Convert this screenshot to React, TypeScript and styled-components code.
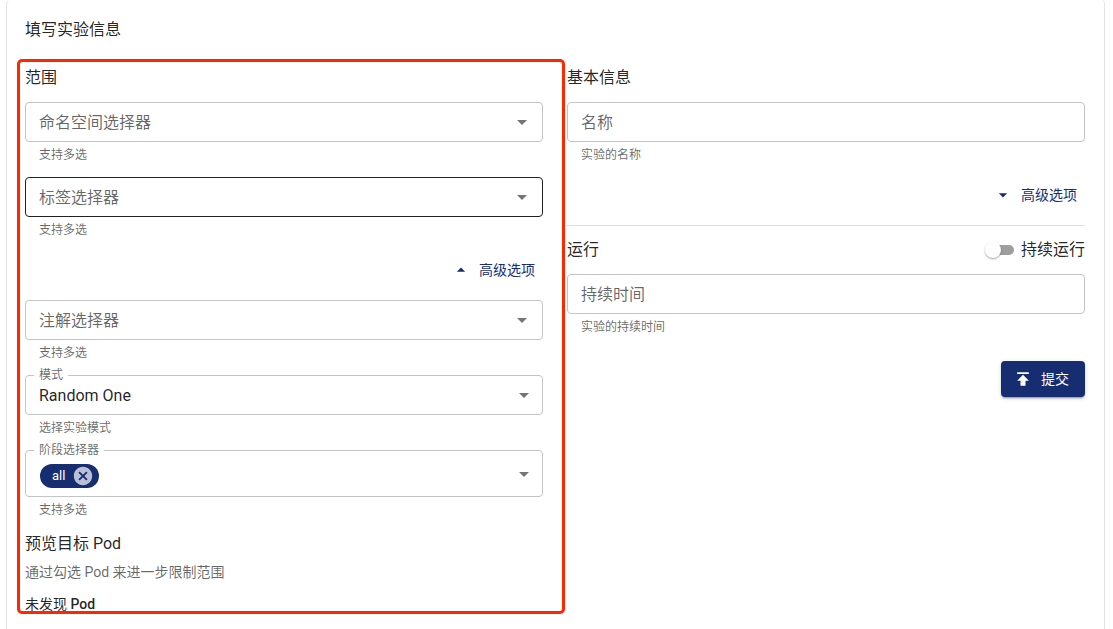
import React, { useState } from 'react';
import styled, { createGlobalStyle, css } from 'styled-components';

const navy = '#172d72';
const ink = 'rgba(0, 0, 0, 0.87)';
const muted = 'rgba(0, 0, 0, 0.6)';

const GlobalStyle = createGlobalStyle`
  *, *::before, *::after { box-sizing: border-box; }
  body {
    margin: 0;
    background: #fff;
    color: ${ink};
    font-family: Roboto, 'Noto Sans CJK SC', sans-serif;
    font-size: 16px;
    line-height: 24px;
  }
  button, input, select { font: inherit; color: inherit; }
`;

const Card = styled.main`
  display: flex;
  flex-direction: column;
  gap: 24px;
  min-height: 100vh;
  margin: 0 8px 0 6px;
  padding: 18px 19px 15px 18px;
  border: 1px solid #e3e3e3;
  border-width: 0 1px;
  border-radius: 4px 4px 0 0;
`;

const Title = styled.h1`
  margin: 0;
  font-size: 16px;
  font-weight: 400;
`;

const Columns = styled.form`
  display: grid;
  grid-template-columns: minmax(0, 1fr) minmax(0, 1fr);
  gap: 24px;
  align-items: start;
`;

const Column = styled.section`
  position: relative;
  display: flex;
  flex-direction: column;
  gap: 12px;
`;

const Highlight = styled.div`
  position: absolute;
  inset: -7px -22px 0 -8px;
  border: 3px solid #ff2600;
  border-radius: 5px;
  pointer-events: none;
`;

const Heading = styled.h2`
  margin: 0;
  font-size: 16px;
  font-weight: 400;
`;

const HeadingRow = styled.div`
  display: flex;
  align-items: center;
  justify-content: space-between;
`;

const FieldRoot = styled.div`
  display: flex;
  flex-direction: column;
  gap: 3px;
`;

const Frame = styled.div`
  position: relative;
  display: flex;
  align-items: center;
`;

const FieldLabel = styled.label<{ $raised?: boolean }>`
  position: absolute;
  color: ${muted};
  pointer-events: none;
  ${({ $raised }) =>
    $raised
      ? css`
          top: -10px;
          left: 9px;
          padding: 0 5px;
          background: #fff;
          font-size: 12px;
          line-height: 20px;
        `
      : css`
          top: 9px;
          left: 14px;
        `}
`;

const outline = css<{ $dark?: boolean }>`
  width: 100%;
  height: 40px;
  border: 1px solid ${({ $dark }) => ($dark ? '#212121' : '#c4c4c4')};
  border-radius: 4px;
  background: #fff;
  outline: none;
`;

const TextInput = styled.input`
  ${outline}
  padding: 2px 13px 0;
`;

const SelectInput = styled.select<{ $dark?: boolean }>`
  ${outline}
  appearance: none;
  padding: 2px 36px 0 13px;
`;

const TagBox = styled.div`
  ${outline}
  display: flex;
  align-items: center;
  height: 47px;
  padding: 5px 36px 0 14px;
`;

const TagInput = styled.input`
  flex: 1;
  min-width: 0;
  border: 0;
  outline: none;
  background: none;
`;

const Arrow = styled.svg<{ $inset: number }>`
  position: absolute;
  right: ${({ $inset }) => $inset}px;
  width: 24px;
  height: 24px;
  fill: #757575;
  pointer-events: none;
`;

const Helper = styled.p`
  margin: 0;
  padding: 0 14px;
  color: ${muted};
  font-size: 12px;
  line-height: 20px;
`;

const Chip = styled.span`
  display: flex;
  align-items: center;
  gap: 7px;
  height: 24px;
  padding: 0 5px 0 12px;
  border-radius: 12px;
  background: ${navy};
  color: #fff;
  font-size: 13px;
`;

const ChipRemove = styled.button`
  display: flex;
  padding: 0;
  border: 0;
  background: none;
  cursor: pointer;
  svg {
    width: 22px;
    height: 22px;
    fill: rgba(255, 255, 255, 0.7);
  }
`;

const MoreButton = styled.button`
  display: flex;
  align-items: center;
  align-self: flex-end;
  gap: 8px;
  height: 36px;
  padding: 0 8px;
  border: 0;
  border-radius: 4px;
  background: none;
  color: ${navy};
  font-size: 14px;
  cursor: pointer;
  svg {
    width: 20px;
    height: 20px;
    fill: currentColor;
  }
`;

const Divider = styled.hr`
  width: 100%;
  height: 1px;
  margin: 0;
  border: 0;
  background: #e0e0e0;
`;

const SwitchLabel = styled.label`
  display: flex;
  align-items: center;
  gap: 7px;
  cursor: pointer;
`;

const Switch = styled.input`
  display: flex;
  align-items: center;
  appearance: none;
  width: 26px;
  height: 10px;
  margin: 0;
  border-radius: 5px;
  background: #9e9e9e;
  cursor: pointer;
  &::before {
    content: '';
    width: 16px;
    height: 16px;
    margin-left: -3px;
    flex: none;
    border-radius: 50%;
    background: #fff;
    box-shadow: 0 1px 2px rgba(0, 0, 0, 0.35);
  }
  &:checked { background: ${navy}; }
  &:checked::before { margin-left: 13px; }
`;

const Submit = styled.button`
  display: flex;
  align-items: center;
  align-self: flex-end;
  gap: 8px;
  height: 36px;
  margin-top: 12px;
  padding: 0 16px 0 12px;
  border: 0;
  border-radius: 4px;
  background: ${navy};
  color: #fff;
  font-size: 14px;
  box-shadow: 0 3px 1px -2px rgba(0, 0, 0, 0.2), 0 2px 2px rgba(0, 0, 0, 0.14),
    0 1px 5px rgba(0, 0, 0, 0.12);
  cursor: pointer;
  svg {
    width: 20px;
    height: 20px;
    fill: currentColor;
  }
`;

const Preview = styled.div`
  display: flex;
  flex-direction: column;
  gap: 6px;
`;

const Hint = styled.p`
  margin: 0;
  color: ${muted};
  font-size: 14px;
  line-height: 20px;
`;

const Empty = styled.p`
  margin: 0;
  font-size: 14px;
  line-height: 20px;
  strong { font-weight: 500; }
`;

const DropArrow = ({ inset }: { inset: number }) => (
  <Arrow $inset={inset} viewBox="0 0 24 24" aria-hidden="true">
    <path d="M7 10l5 5 5-5z" />
  </Arrow>
);

type FieldProps = { id: string; label: string; helper: string };

function TextField({ id, label, helper }: FieldProps) {
  const [value, setValue] = useState('');
  return (
    <FieldRoot>
      <Frame>
        <TextInput
          id={id}
          type="text"
          value={value}
          aria-describedby={`${id}-help`}
          onChange={(e) => setValue(e.target.value)}
        />
        <FieldLabel htmlFor={id} $raised={value !== ''}>{label}</FieldLabel>
      </Frame>
      <Helper id={`${id}-help`}>{helper}</Helper>
    </FieldRoot>
  );
}

function SelectField({
  id, label, helper, options = [], dark,
}: FieldProps & { options?: string[]; dark?: boolean }) {
  const [value, setValue] = useState(options[0] ?? '');
  return (
    <FieldRoot>
      <Frame>
        <SelectInput
          id={id}
          $dark={dark}
          value={value}
          aria-describedby={`${id}-help`}
          onChange={(e) => setValue(e.target.value)}
        >
          {options.length === 0 && <option value="" />}
          {options.map((o) => <option key={o}>{o}</option>)}
        </SelectInput>
        <FieldLabel htmlFor={id} $raised={value !== ''}>{label}</FieldLabel>
        <DropArrow inset={value ? 7 : 9} />
      </Frame>
      <Helper id={`${id}-help`}>{helper}</Helper>
    </FieldRoot>
  );
}

function TagField({ id, label, helper }: FieldProps) {
  const [tags, setTags] = useState(['all']);
  return (
    <FieldRoot>
      <Frame>
        <TagBox>
          {tags.map((tag) => (
            <Chip key={tag}>
              {tag}
              <ChipRemove
                type="button"
                aria-label={tag}
                onClick={() => setTags(tags.filter((t) => t !== tag))}
              >
                <svg viewBox="0 0 24 24" aria-hidden="true">
                  <path d="M12 2C6.47 2 2 6.47 2 12s4.47 10 10 10 10-4.47 10-10S17.53 2 12 2zm5 13.59L15.59 17 12 13.41 8.41 17 7 15.59 10.59 12 7 8.41 8.41 7 12 10.59 15.59 7 17 8.41 13.41 12 17 15.59z" />
                </svg>
              </ChipRemove>
            </Chip>
          ))}
          <TagInput id={id} type="text" aria-describedby={`${id}-help`} />
        </TagBox>
        <FieldLabel htmlFor={id} $raised>{label}</FieldLabel>
        <DropArrow inset={7} />
      </Frame>
      <Helper id={`${id}-help`}>{helper}</Helper>
    </FieldRoot>
  );
}

function More({ open, onClick }: { open: boolean; onClick: () => void }) {
  return (
    <MoreButton type="button" aria-expanded={open} onClick={onClick}>
      <svg viewBox="0 0 24 24" aria-hidden="true">
        <path d={open ? 'M7 14l5-5 5 5z' : 'M7 10l5 5 5-5z'} />
      </svg>
      高级选项
    </MoreButton>
  );
}

export default function App() {
  const [scopeOpen, setScopeOpen] = useState(true);
  const [basicOpen, setBasicOpen] = useState(false);
  return (
    <>
      <GlobalStyle />
      <Card>
        <Title>填写实验信息</Title>
        <Columns onSubmit={(e) => e.preventDefault()}>
          <Column>
            <Heading>范围</Heading>
            <SelectField id="namespace" label="命名空间选择器" helper="支持多选" />
            <SelectField id="labels" label="标签选择器" helper="支持多选" dark />
            <More open={scopeOpen} onClick={() => setScopeOpen(!scopeOpen)} />
            {scopeOpen && (
              <>
                <SelectField id="annotations" label="注解选择器" helper="支持多选" />
                <SelectField id="mode" label="模式" helper="选择实验模式" options={['Random One']} />
                <TagField id="phase" label="阶段选择器" helper="支持多选" />
              </>
            )}
            <Preview>
              <Heading>预览目标 Pod</Heading>
              <Hint>通过勾选 Pod 来进一步限制范围</Hint>
            </Preview>
            <Empty>未发现 <strong>Pod</strong></Empty>
            <Highlight />
          </Column>
          <Column>
            <Heading>基本信息</Heading>
            <TextField id="name" label="名称" helper="实验的名称" />
            <More open={basicOpen} onClick={() => setBasicOpen(!basicOpen)} />
            <Divider />
            <HeadingRow>
              <Heading>运行</Heading>
              <SwitchLabel>
                <Switch type="checkbox" role="switch" />
                持续运行
              </SwitchLabel>
            </HeadingRow>
            <TextField id="duration" label="持续时间" helper="实验的持续时间" />
            <Submit type="submit">
              <svg viewBox="0 0 24 24" aria-hidden="true">
                <path d="M5 4v2h14V4H5zm0 10h4v6h6v-6h4l-7-7-7 7z" />
              </svg>
              提交
            </Submit>
          </Column>
        </Columns>
      </Card>
    </>
  );
}
